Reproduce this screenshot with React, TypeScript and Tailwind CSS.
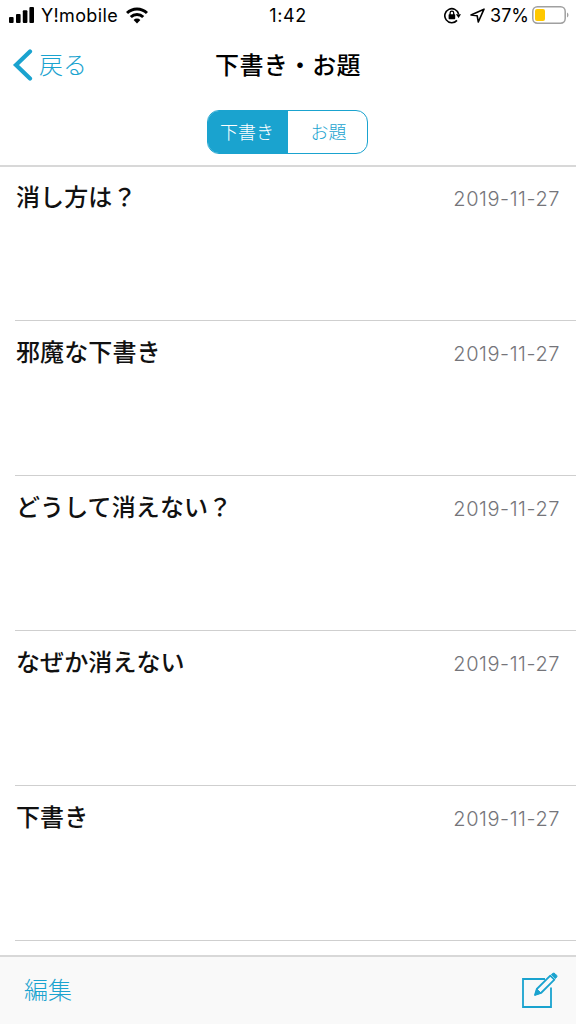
const drafts = [
  { title: '消し方は？', date: '2019-11-27' },
  { title: '邪魔な下書き', date: '2019-11-27' },
  { title: 'どうして消えない？', date: '2019-11-27' },
  { title: 'なぜか消えない', date: '2019-11-27' },
  { title: '下書き', date: '2019-11-27' },
];

function StatusBar() {
  return (
    <div className="grid h-[30px] grid-cols-3 items-center text-black">
      <div className="flex items-center pl-[9px]">
        <svg width="25" height="16" viewBox="0 0 25 16" fill="currentColor">
          <rect x="0" y="10" width="4.6" height="6" rx="1" />
          <rect x="7" y="7" width="4.6" height="9" rx="1" />
          <rect x="13.8" y="3.2" width="4.6" height="12.8" rx="1" />
          <rect x="20.4" y="0" width="4.6" height="16" rx="1" />
        </svg>
        <span className="ml-[7px] pt-px text-[18px] leading-6 tracking-[0.35px]">Y!mobile</span>
        <svg className="ml-2" width="22" height="17" viewBox="0 0 22 17" fill="none" stroke="currentColor" strokeWidth="3">
          <path d="M1 6 A14.2 14.2 0 0 1 21 6" />
          <path d="M4.8 10 A8.8 8.8 0 0 1 17.2 10" />
          <path d="M11 16.5 L7.6 13 A4.8 4.8 0 0 1 14.4 13 Z" fill="currentColor" stroke="none" />
        </svg>
      </div>
      <div className="pt-px text-center text-[18px] leading-6 tracking-[0.6px]">1:42</div>
      <div className="flex items-center justify-end pr-[7px]">
        <svg width="17" height="17" viewBox="0 0 17 17" fill="none" stroke="currentColor">
          <path d="M13 13.4 A7 7 0 1 1 14.6 7" strokeWidth="1.6" />
          <path d="M11.8 7.3 H17 L14.6 11 Z" fill="currentColor" stroke="none" />
          <rect x="4.6" y="7.2" width="6.6" height="5" rx="0.7" fill="currentColor" stroke="none" />
          <path d="M6.1 8 V6 A1.8 1.8 0 0 1 9.7 6 V8" strokeWidth="1.3" />
        </svg>
        <svg className="ml-[9px]" width="15" height="15" viewBox="0 0 15 15" fill="none" stroke="currentColor" strokeWidth="1.6" strokeLinejoin="round">
          <path d="M1 7 L14 1.2 L8.3 14 L7.2 7.8 Z" />
        </svg>
        <span className="ml-[5px] pt-px text-[18px] leading-6">37%</span>
        <svg className="ml-[3px]" width="37" height="18" viewBox="0 0 37 18">
          <rect x="0.8" y="0.8" width="32.4" height="16.4" rx="4.6" fill="none" stroke="#a0a0a0" strokeWidth="1.5" />
          <rect x="3" y="3" width="10" height="12" rx="2" fill="#ffc800" />
          <path d="M35 6.5 Q36.5 7.3 36.5 9 Q36.5 10.7 35 11.5 Z" fill="#a0a0a0" />
        </svg>
      </div>
    </div>
  );
}

export default function App() {
  return (
    <div className="flex h-[1024px] w-[576px] flex-col overflow-hidden bg-white font-['Inter','Noto_Sans_CJK_JP',sans-serif]">
      <header className="flex h-[167px] shrink-0 flex-col border-b-2 border-[#d8d8d8]">
        <StatusBar />
        <div className="grid h-[70px] grid-cols-3 items-center">
          <button className="flex items-center pl-3 text-[#1aa3cf]">
            <svg width="21" height="32" viewBox="0 0 21 32" fill="none" stroke="currentColor" strokeWidth="4.2" strokeLinecap="round">
              <path d="M18 2.5 L4 16 L18 29.5" />
            </svg>
            <span className="ml-1.5 pt-px text-[24px] leading-8 font-light">戻る</span>
          </button>
          <h1 className="pt-0.5 text-center text-[24px] leading-8 font-medium tracking-[0.3px] whitespace-nowrap text-black">下書き・お題</h1>
        </div>
        <div className="flex justify-center pt-[10px] pr-px">
          <div className="flex h-11 w-[161px] overflow-hidden rounded-xl border-[1.5px] border-[#1aa3cf] text-[18px] font-light">
            <button className="w-20 bg-[#1aa3cf] pr-0.5 text-white">下書き</button>
            <button className="flex-1 pl-0.5 text-[#1aa3cf]">お題</button>
          </div>
        </div>
      </header>
      <main className="-mt-px min-h-0 flex-1 overflow-hidden pl-[15px]">
        {drafts.map((draft) => (
          <article key={draft.title} className="flex h-[155px] items-start justify-between border-b border-[#cfcfcf] pr-4">
            <h2 className="pt-4 pl-px text-[24px] leading-8 font-medium tracking-[0.1px] text-[#111]">{draft.title}</h2>
            <time className="pt-[17px] text-[20px] leading-8 font-light tracking-[0.55px] text-[#75757a]">{draft.date}</time>
          </article>
        ))}
      </main>
      <footer className="flex h-[69px] shrink-0 items-center justify-between border-t-2 border-[#d8d8d8] bg-[#f9f9f9] pr-[18px] pl-6 text-[#1aa3cf]">
        <button className="pt-px text-[24px] leading-8 font-light">編集</button>
        <svg width="37" height="37" viewBox="0 0 37 37" fill="none" stroke="currentColor">
          <path d="M24 7 H2 V35 H30 V15.5" strokeWidth="1.8" />
          <path d="M14 23 L15.8 17 L29.3 3.6 L33.4 7.6 L20 21 Z" strokeWidth="1.8" strokeLinejoin="round" />
          <path d="M14 23 L15.8 17 L20 21 Z M30.5 2.4 L31.8 1.4 Q33 .6 34 1.7 L35.6 3.3 Q36.4 4.3 35.6 5.3 L34.5 6.5 Z" fill="currentColor" strokeWidth="1" />
        </svg>
      </footer>
    </div>
  );
}
